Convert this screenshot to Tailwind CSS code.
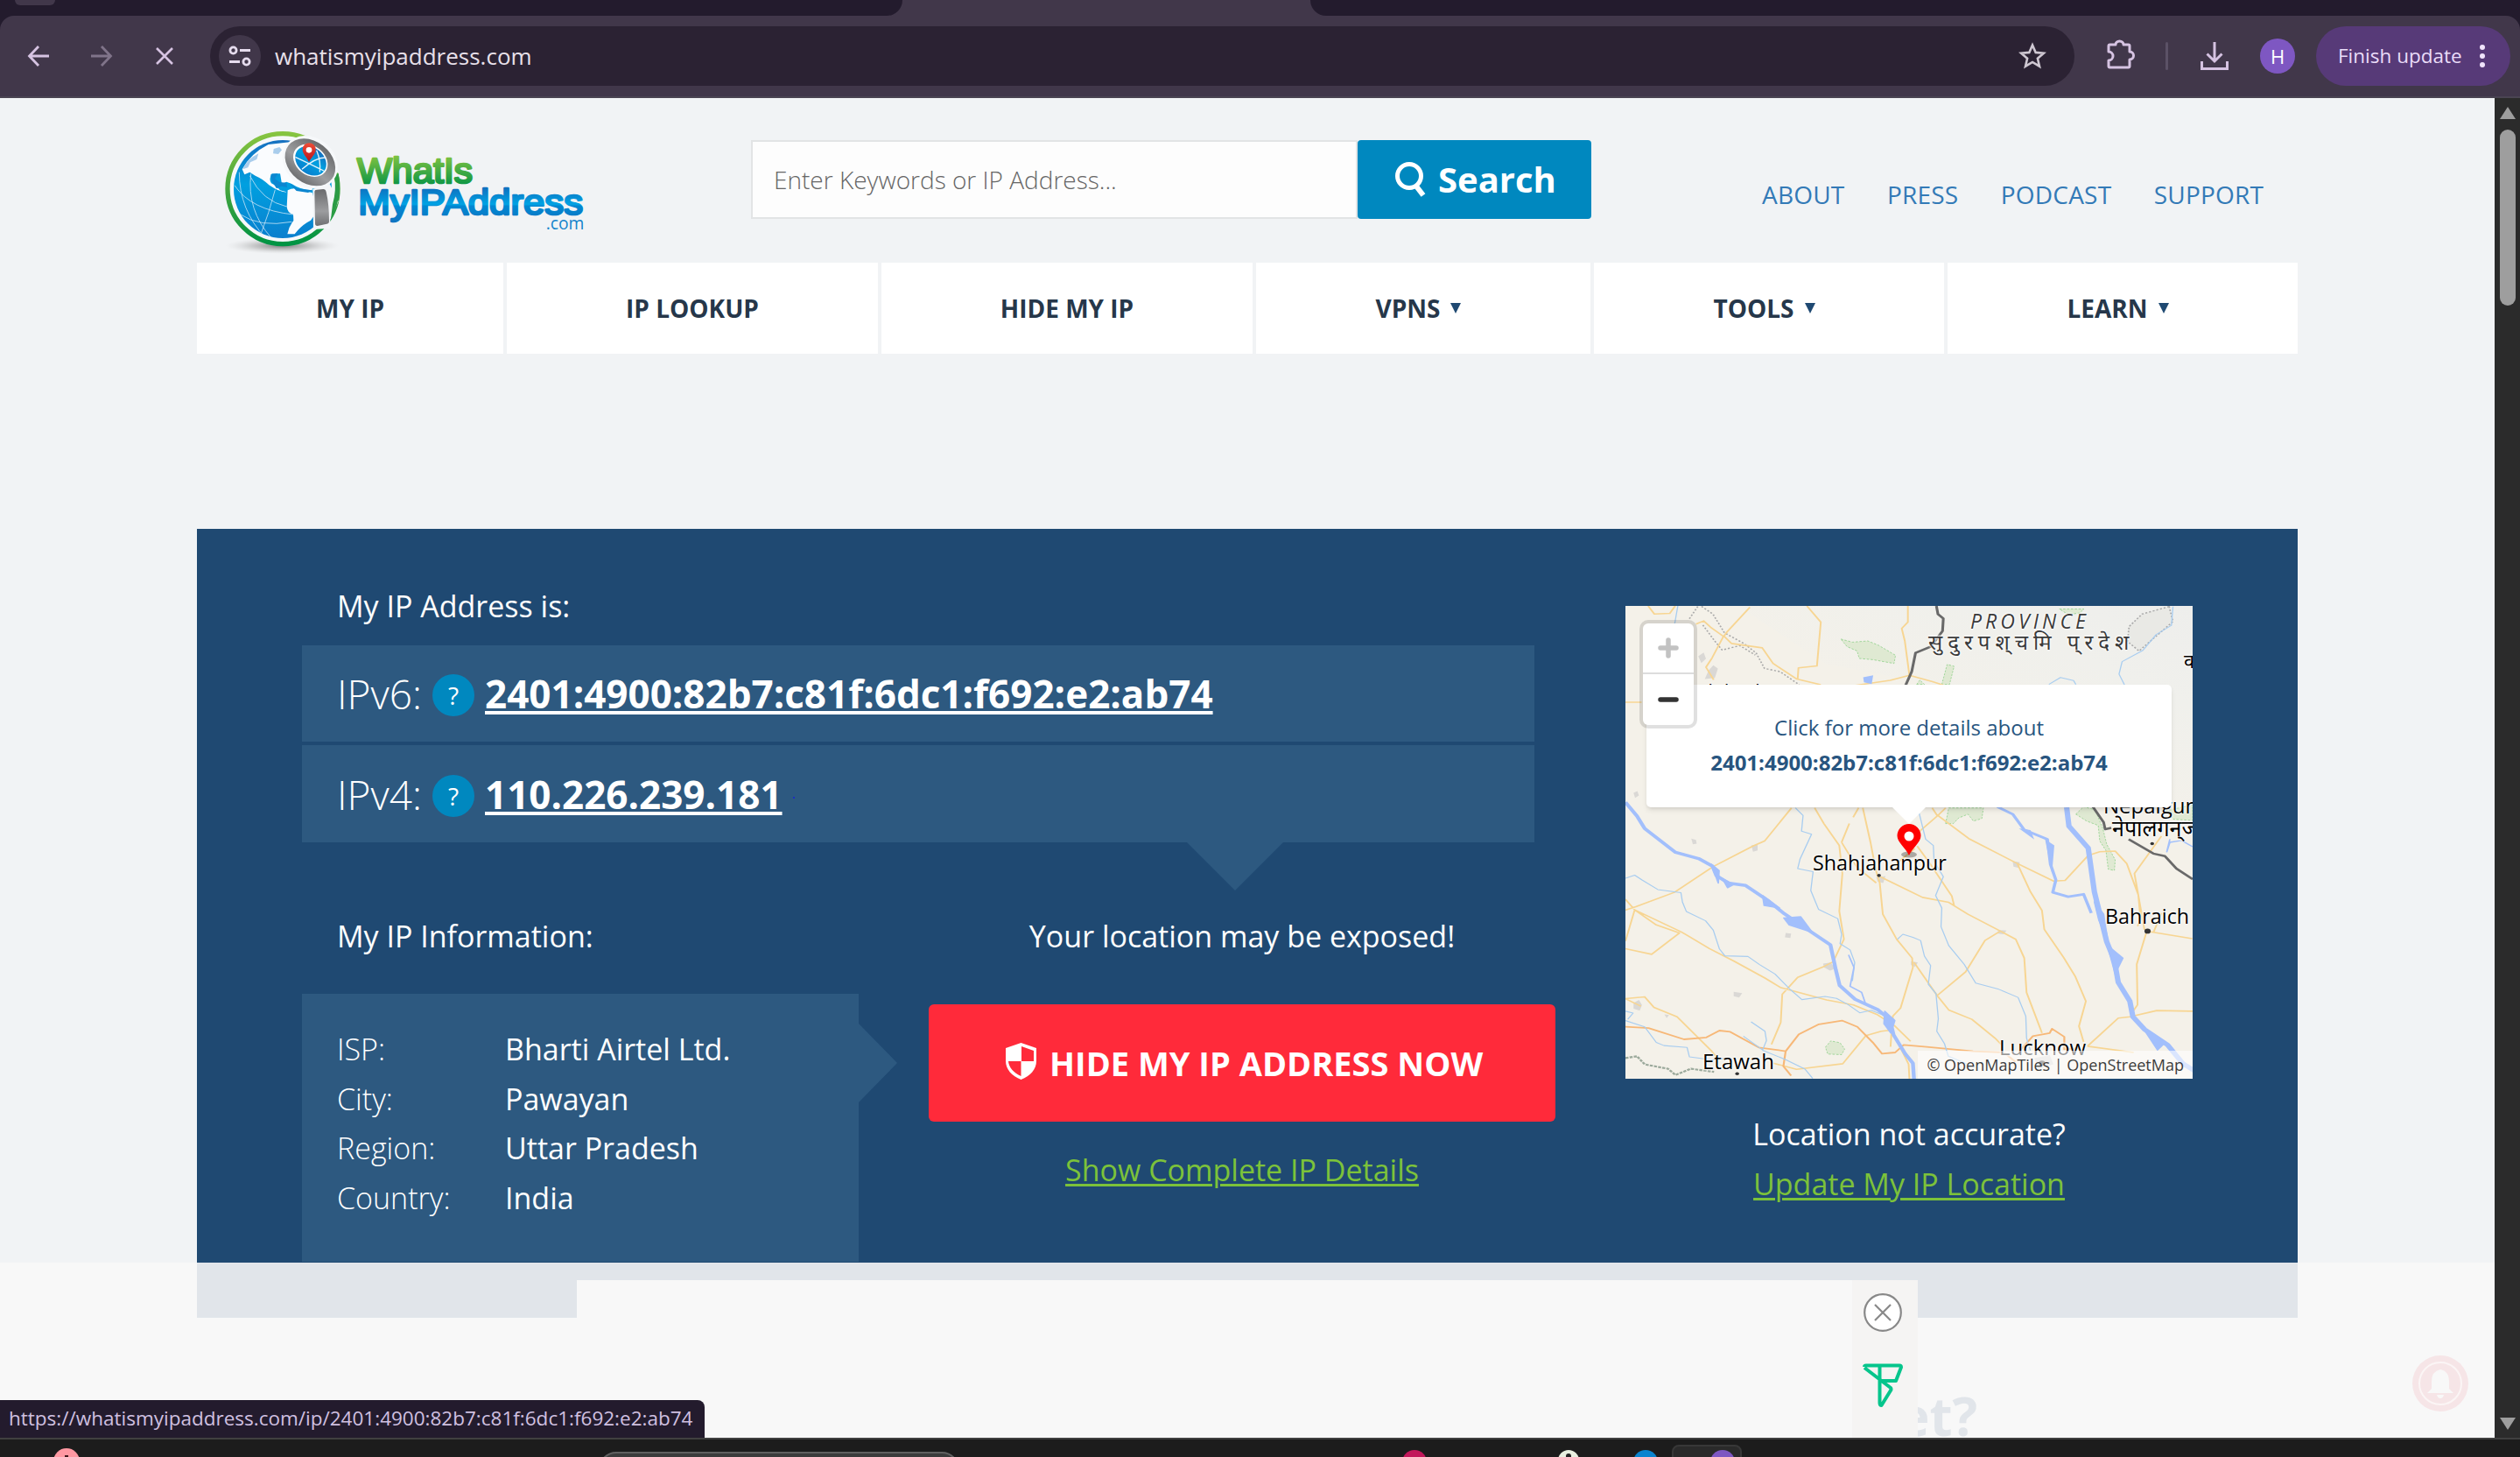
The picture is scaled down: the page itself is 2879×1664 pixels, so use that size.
<!DOCTYPE html>
<html lang="en">
<head>
<meta charset="utf-8">
<title>What Is My IP Address</title>
<script src="https://cdn.jsdelivr.net/npm/@tailwindcss/browser@4"></script>
</head>
<body class="flex h-[1664px] w-[2879px] flex-col overflow-hidden bg-[#f1f3f5] font-['Open_Sans','Noto_Sans',sans-serif]">

<!-- Browser tab strip -->
<div class="flex h-[18px] shrink-0 justify-between bg-[#41374a]">
  <div class="h-full w-[1031px] rounded-br-[20px] bg-[#231b2d]"><div class="ml-[17px] h-1.5 w-[46px] rounded-b-lg bg-[#41374a]"></div></div>
  <div class="h-full w-[1382px] rounded-bl-[20px] bg-[#231b2d]"></div>
</div>
<!-- Browser toolbar -->
<div class="h-[94px] shrink-0 bg-[#231b2d]">
<div class="flex h-full items-start rounded-t-[16px] border-b-2 border-[#4a4452] bg-[#41374a] pl-[30px] pt-3">
  <div class="flex h-[68px] w-[210px] items-center gap-11">
    <svg class="size-7" viewBox="0 0 28 28" fill="none" stroke="#d6c3e2" stroke-width="2.8"><path d="M26 14H4M14 3 3.500 14 14 25"/></svg>
    <svg class="size-7" viewBox="0 0 28 28" fill="none" stroke="#80748a" stroke-width="2.8"><path d="M2 14h22M14 3l10.500 11L14 25"/></svg>
    <svg class="size-7" viewBox="0 0 28 28" fill="none" stroke="#d6c3e2" stroke-width="2.600"><path d="M5 5l18 18M23 5 5 23"/></svg>
  </div>
  <div class="flex h-[68px] w-[2130px] items-center rounded-full bg-[#2b2233] pl-2.5">
    <div class="flex size-12 items-center justify-center rounded-full bg-[#41374a]">
      <svg class="size-7" viewBox="0 0 28 28" fill="none" stroke="#e6dcee" stroke-width="2.800"><circle cx="6.500" cy="7.500" r="3.600"/><path d="M14 7.500h12M2 20.500h12"/><circle cx="21.500" cy="20.500" r="3.600"/></svg>
    </div>
    <span class="ml-4 text-[26px] leading-[68px] text-[#e8e0ea]">whatismyipaddress.com</span>
    <svg class="ml-auto mr-8 size-8" viewBox="0 0 32 32" fill="none" stroke="#cfc8d2" stroke-width="2.600"><path d="M16 3.500l3.700 8.400 9.100.8-6.900 6 2.100 9-8-4.800-8 4.800 2.100-9-6.900-6 9.100-.8z"/></svg>
  </div>
  <div class="ml-[34px] flex h-[68px] items-center">
    <svg class="-mt-1 size-9" viewBox="0 0 36 36"><path d="M5 8.500Q5 7 6.500 7H13a4.500 4 0 0 1 9 0h5.500Q29 7 29 8.500V15a4.500 4.500 0 0 1 0 9v7.500q0 1.500-1.500 1.500h-21Q5 33 5 31.500V25a5 5 0 0 0 0-10z" fill="none" stroke="#d6c3e2" stroke-width="3" stroke-linejoin="round"/></svg>
    <div class="ml-[34px] h-8 w-[3px] rounded bg-[#5b5166]"></div>
    <svg class="ml-[37px] size-8" viewBox="0 0 32 32" fill="none" stroke="#d6c3e2" stroke-width="3"><path d="M16 0v22M7.500 13.500 16 22l8.500-8.500M1.500 22v8.500h29V22"/></svg>
    <div class="ml-[36px] flex size-10 items-center justify-center rounded-full bg-[#7e57c2] text-[22px] text-white">H</div>
    <div class="ml-6 flex h-[68px] w-[222px] items-center rounded-full bg-[#573a78] pl-[25px] text-[22.500px] text-[#eadcf8]">Finish update
      <div class="ml-auto mr-[29px] flex flex-col gap-1"><i class="size-1.5 rounded-full bg-[#f0e4fb]"></i><i class="size-1.5 rounded-full bg-[#f0e4fb]"></i><i class="size-1.5 rounded-full bg-[#f0e4fb]"></i></div>
    </div>
  </div>
</div>
</div>

<!-- Viewport -->
<div class="flex h-[1530px] shrink-0">
<div class="relative h-full w-[2850px] overflow-hidden">
<div class="mx-auto w-[2400px]">

  <header class="flex h-[188px] items-start">
    <svg class="-ml-[5px] mt-[18px] h-[170px] w-[500px] shrink-0" viewBox="0 0 1500 510">
      <defs>
        <linearGradient id="g1" x1="0" y1="0" x2="0" y2="1"><stop offset="0" stop-color="#86c440"/><stop offset=".55" stop-color="#3fa33e"/><stop offset="1" stop-color="#009444"/></linearGradient>
        <linearGradient id="g2" gradientUnits="userSpaceOnUse" x1="0" y1="145" x2="0" y2="245"><stop offset="0" stop-color="#7fc241"/><stop offset="1" stop-color="#0a9545"/></linearGradient>
        <linearGradient id="g3" gradientUnits="userSpaceOnUse" x1="0" y1="252" x2="0" y2="375"><stop offset="0" stop-color="#0f6fbe"/><stop offset=".47" stop-color="#00a3e4"/><stop offset=".52" stop-color="#0088d2"/><stop offset="1" stop-color="#1273c0"/></linearGradient>
        <linearGradient id="g4" x1="0" y1="0" x2="0" y2="1"><stop offset="0" stop-color="#6a6b6d"/><stop offset=".6" stop-color="#9c9d9f"/><stop offset="1" stop-color="#6f7072"/></linearGradient>
        <linearGradient id="g5" x1="0" y1="0" x2="0" y2="1"><stop offset="0" stop-color="#1670c0"/><stop offset=".45" stop-color="#00a0e0"/><stop offset="1" stop-color="#0a7fce"/></linearGradient>
        <linearGradient id="g6" x1="0" y1="0" x2="0" y2="1"><stop offset="0" stop-color="#f04e37"/><stop offset="1" stop-color="#b5121b"/></linearGradient>
        <radialGradient id="sh"><stop offset="0" stop-color="#555" stop-opacity=".75"/><stop offset=".5" stop-color="#888" stop-opacity=".4"/><stop offset="1" stop-color="#ccc" stop-opacity="0"/></radialGradient>
        <clipPath id="globe"><circle cx="309" cy="258" r="168"/></clipPath>
      </defs>
      <ellipse cx="307" cy="452" rx="195" ry="28" fill="url(#sh)"/>
      <circle cx="309" cy="257" r="189" fill="#f6f8fa" stroke="url(#g1)" stroke-width="16"/>
      <circle cx="309" cy="258" r="168" fill="url(#g5)"/>
      <g clip-path="url(#globe)">
        <path d="M170 190Q200 135 260 105L340 96 420 180 410 262Q372 262 340 240L322 233 306 240 300 205 272 205Q260 222 270 238L285 246 300 262 322 268Q300 270 262 244 240 222 215 212L196 200 178 208zM326 262Q350 248 376 264L410 270 430 330 405 365Q372 382 350 412H325Q330 385 346 366L345 345Q325 340 323 318z" fill="#fafcfe"/>
        <path d="M278 120l20-6 8 10-12 14-18-2zM172 190q14-34 54-54l-6 20-22 10-8 18z" fill="#a9cdec"/>
        <path d="M268 208l24-4-10 18 16 12 24 2 2 16-20-4-16 8-14-22zM330 236l30 20 50 6-14 8-40-6z" fill="#0c86d0"/>
        <g fill="none" stroke="#bfe0f5" stroke-width="3" opacity=".85"><path d="M144 245Q200 330 345 345M165 345Q230 390 340 370M160 200Q160 330 250 425M200 205Q185 330 270 425M283 260Q262 340 235 410M196 212Q240 300 323 318"/></g>
      </g>
      <path d="M470 90 520 190 478 212 395 70z" fill="#f1f3f5"/>
      <path d="M412 258 470 240 500 300 472 362 472 392 414 396z" fill="#f4f6f8"/>
      <path d="M500 204Q514 290 474 360L480 310Q494 260 486 216z" fill="#2b9b45"/>
      <ellipse cx="403" cy="166" rx="101" ry="84" transform="rotate(38 403 166)" fill="#f6f8fa"/>
      <ellipse cx="403" cy="166" rx="94" ry="72" transform="rotate(38 403 166)" fill="url(#g4)"/>
      <ellipse cx="404" cy="160" rx="64" ry="50" transform="rotate(38 404 160)" fill="#fff"/>
      <ellipse cx="405" cy="161" rx="58" ry="45" transform="rotate(38 405 161)" fill="url(#g5)"/>
      <path d="M352 148Q410 175 455 198M375 190Q420 150 455 150M425 125Q440 160 436 200" fill="none" stroke="#e6f4fc" stroke-width="4"/>
      <path d="M399 165C390 145 377 138 377 122a22 22 0 0 1 45 0C422 138 408 146 399 165z" fill="url(#g6)"/><circle cx="399" cy="124" r="10" fill="#fff"/>
      <path d="M418 266Q418 260 426 260L448 258Q456 258 458 268 468 310 468 368 468 376 460 377L428 384Q420 384 420 376z" fill="url(#g4)"/>
      <g font-family="'Liberation Sans'" font-weight="400" stroke-linejoin="round" stroke-linecap="round">
        <text x="564" y="237" font-size="122" textLength="396" lengthAdjust="spacingAndGlyphs" fill="url(#g2)" stroke="url(#g2)" stroke-width="8">WhatIs</text>
        <text x="568" y="344" font-size="122" textLength="770" lengthAdjust="spacingAndGlyphs" fill="url(#g3)" stroke="url(#g3)" stroke-width="8">MyIPAddress</text>
      </g>
      <text x="1211" y="396" font-size="62" font-family="'Open Sans'" textLength="131" lengthAdjust="spacingAndGlyphs" fill="#1584cc">.com</text>
    </svg>
    <div class="ml-[138px] mt-12 flex h-[90px] w-[960px]">
      <div class="w-[693px] border-2 border-[#e2e4e5] bg-[#fdfdfd] pl-6 text-[28px] font-light leading-[86px] text-[#666]">Enter Keywords or IP Address...</div>
      <div class="flex w-[267px] items-center rounded-[4px] bg-[#0088bf] pl-[42px] text-[40px] font-bold leading-[90px] text-white">
        <svg class="size-10" viewBox="0 0 40 40" fill="none" stroke="#fff" stroke-width="5"><circle cx="17" cy="16" r="13.500"/><path d="M24.500 27l8.500 11" stroke-width="6"/></svg>
        <span class="ml-2.5">Search</span>
      </div>
    </div>
    <nav class="ml-[195px] mt-[90px] flex gap-[48.500px] text-[28px] font-medium leading-[40px] tracking-[0.2px] text-[#337ab7]"><span>ABOUT</span><span>PRESS</span><span>PODCAST</span><span>SUPPORT</span></nav>
  </header>

  <nav class="flex h-[104px] gap-1 text-center text-[28px] font-bold leading-[105px] text-[#26374a]">
    <div class="w-[350px] bg-white">MY IP</div>
    <div class="w-[424px] bg-white">IP LOOKUP</div>
    <div class="w-[424px] bg-white">HIDE MY IP</div>
    <div class="flex w-[382px] items-center justify-center gap-3 bg-white pr-[11px]">VPNS<svg class="h-3 w-3" viewBox="0 0 12 12"><path d="M0 0h12L6 12z" fill="#1f4972"/></svg></div>
    <div class="flex w-[400px] items-center justify-center gap-3 bg-white pr-[11px]">TOOLS<svg class="h-3 w-3" viewBox="0 0 12 12"><path d="M0 0h12L6 12z" fill="#1f4972"/></svg></div>
    <div class="flex w-[400px] items-center justify-center gap-3 bg-white pr-[11px]">LEARN<svg class="h-3 w-3" viewBox="0 0 12 12"><path d="M0 0h12L6 12z" fill="#1f4972"/></svg></div>
  </nav>

  <main class="mt-[200px] flex h-[838px] bg-[#1f4972] pl-[120px] text-[34px] leading-10 text-white">
    <div class="w-[1432px] pt-[68px]">
      <h2 class="pl-10">My IP Address is:</h2>
      <div class="relative mt-[25px] w-[1408px] leading-[110px]">
        <div class="flex h-[110px] items-center bg-[#2d5980] pl-10 text-[44px]"><span class="w-[109px] text-[46px] font-light">IPv6:</span><span class="mt-1 flex size-12 items-center justify-center rounded-full bg-[#0088bf] text-[28px] leading-none">?</span><a class="ml-3 font-bold underline decoration-4 underline-offset-[3px] [text-decoration-skip-ink:none]">2401:4900:82b7:c81f:6dc1:f692:e2:ab74</a></div>
        <div class="mt-1 flex h-[111px] items-center bg-[#2d5980] pl-10 text-[44px]"><span class="w-[109px] text-[46px] font-light">IPv4:</span><span class="mt-1 flex size-12 items-center justify-center rounded-full bg-[#0088bf] text-[28px] leading-none">?</span><a class="ml-3 font-bold underline decoration-4 underline-offset-[3px] [text-decoration-skip-ink:none]">110.226.239.181</a><i class="ml-3 mt-2 size-0.5 bg-[#1c2fc0]"></i></div>
        <svg class="absolute left-[1011px] top-full h-[55px] w-[110px]" viewBox="0 0 110 55"><path d="M0 0h110L55 55z" fill="#2d5980"/></svg>
      </div>
      <div class="mt-[87px] flex">
        <div class="w-[716px]">
          <h2 class="pl-10">My IP Information:</h2>
          <div class="relative mt-[46px] grid h-[306px] w-[636px] grid-cols-[192px_1fr] auto-rows-[56.500px] bg-[#2d5980] pl-10 pt-[35px] leading-[56.500px]">
            <span class="font-light">ISP:</span><span>Bharti Airtel Ltd.</span>
            <span class="font-light">City:</span><span>Pawayan</span>
            <span class="font-light">Region:</span><span>Uttar Pradesh</span>
            <span class="font-light">Country:</span><span>India</span>
            <svg class="absolute left-full top-[34px] h-[90px] w-[44px]" viewBox="0 0 44 90"><path d="M0 0v90L44 45z" fill="#2d5980"/></svg>
          </div>
        </div>
        <div class="w-[716px] text-center">
          <p>Your location may be exposed!</p>
          <div class="mt-[58px] flex h-[134px] items-center rounded-[6px] bg-[#ff2a3a] pl-[88px] text-[38px] font-bold leading-[134px]">
            <svg class="-mt-1 h-[42px] w-[35px]" viewBox="0 0 35 42"><path d="M17.500 0 35 6v15c0 9-7 17-17.500 21C7 38 0 30 0 21V6z" fill="#fff"/><path d="M18 4l14 5v12H18zM17.500 21v17C9 34 3.500 28 3 21z" fill="#ff2a3a"/></svg>
            <span class="ml-[15px]">HIDE MY IP ADDRESS NOW</span>
          </div>
          <p class="mt-[35px] text-[#7cc23a]"><a class="underline decoration-[3px] underline-offset-[3px]">Show Complete IP Details</a></p>
        </div>
      </div>
    </div>

    <div class="ml-20 w-[648px] pt-[88px]">
      <div class="relative h-[540px] overflow-hidden bg-[#f4f1e9]">
        <svg class="h-full w-full" viewBox="39 34 1472 1512" preserveAspectRatio="none" fill="none" stroke-linejoin="round">
          <defs><linearGradient id="hill" x1="0" y1="1" x2="1" y2="0"><stop offset=".35" stop-color="#f4f1e9"/><stop offset=".75" stop-color="#f0f0ec"/><stop offset="1" stop-color="#eeeeec"/></linearGradient></defs>
          <path d="M330 34H1511V680L1250 670 900 300 560 220z" fill="url(#hill)"/>
          <g fill="#dfe9d2" stroke="#8fd08a" stroke-width="2" stroke-dasharray="6 4">
            <path d="M598 140l30 10 40-4 28 14 44 32-4 26-54-12-36-4-6-24-26-14zM860 285l14-64 18 6-12 58zM1165 44h64l-10 12-30 6zM870 730l8-50h90l-4 34-22 8-14-22-24 12-14 18zM1208 700l20-24 30 10 20 60 10 50 22 50-2 34-16-4-6-60-16-30-4-50-30-14zM558 1445l14-20 24 6 12 20-8 18-36-2zM795 285l8-14 12 14zM1440 690l71-20v50l-50-4z"/>
          </g>
          <g fill="#dad8d5">
            <path d="M228 195l14-12 6 20-12 14zM255 240l12-16 12 10-8 30-26 4zM60 632l10-6 4 14-10 8zM210 778l12 4 2 12-10 2zM366 800l16-4v20l-12 4zM455 1080l14 2-2 14-14-2zM552 1178l20-4 12 20-14 6-16-10zM320 1268l22 4-8 14-14-4zM60 1304l14-10 8 16-6 18-16-6zM690 902l24-4-6 22-14-4zM1044 850l18 4-2 18-14-4zM1006 1070l22 2-8 12-14-2zM780 1170l18 4-8 14-10-6zM1100 1480l40-10 10 30-40 14zM140 1340l12 2-6 10z"/>
          </g>
          <path d="M205 75l25-45 36 30 30 60 50 34 32 30 22 50 40 10 50 42M240 95l30 50 20 30 46-14 40 30" stroke="#aaa" stroke-width="4" stroke-dasharray="5 5"/>
          <path d="M1450 36l-70 24-34 40-4 48 30 30 88-94z" stroke="#aaa" stroke-width="4" stroke-dasharray="5 5" fill="#e9e9e5"/>
          <!-- roads -->
          <g stroke="#f7d592" stroke-width="4.500">
            <path d="M98 34l16 26 40-2 14-24M362 38l-60 80-8 14-34-30-18-20-20 10M294 130l20 24 80 14 28 50 62 50 62 18M294 130l-30 70-16 30 20 40M510 34l36 52-10 140-48 6-2 36M772 34v52l-16 20 8 40 12 110-50 16-90 16M776 256l60 20 30 12M39 342h42"/>
            <path d="M470 680l-70 106-30 16-104 66-100 82-100 46-35 14M39 972l24 34 120 70 14 10 60 44 64 40 80 54 40 30 120 40 70 16 60 30 46 36 42 50M63 1006l-24 100M39 1130l68 18 72-68-60-26-56-48M530 680l24 50 40 70 8 90-8 120 8 60 4 30-28 72-22 14-70 36-40 54-4 90-24 70M655 680l20 110 14 90 10 40 8 100 36 80 40 60 2 30-32 130-20 26-4 60-2 38M644 680l-14 30M600 790l20-60M600 790l40 80 50 50M700 900l110 66 68 16 14 10-6-30-60-110-30-50M760 800l90-96 20-24M790 810l-60 60M850 704l80 74 120 76 100 60 30-2 60-80 30-12 40-2 30 40 30 100 6 80-8 20M835 680l14 26M1056 858l34 90 30 60 6 60 50 90 30 60 28 80-18 80 12 50M878 982l50 38 84 54 40 26 22 60 6 110 40 130M1012 1074l-40 30-50 100-74 76-60-106M848 1280l30 46 60 30 60 60 16 20M1238 1442l80-90 30-4 70-20 93 2M1238 1442l120 20M1354 1334l14-24-2-130 26-106 118 24M1410 1076l20-60M1430 770l-70 120 16 110 10 70M39 1290l50-6 24 34 60 30 90 110 20 30M39 1290l40 24M663 1408l-60 90-120 18-60-20M663 1408l40-14 30-4M750 1440l24 60 2 46"/>
          </g>
          <path d="M39 1380l60 4 92 36 58-6 34-22 28 4 74 50 70 12 34-54 52-32 60-12 40 20 40 50 24 36 34-4 22-24 60 6 120 14 80 4 30 30M455 1456l-6 50 20 30M1060 1460l36-50 44-10 6-14 32 26v40l40-4" stroke="#f7b878" stroke-width="5"/>
          <!-- rivers -->
          <g stroke="#a8cdf0" stroke-width="3">
            <path d="M175 34l-8 56M39 905l24-10 20 16 40 30 60 10 4 30 10 30 50 30 20 30 16 60 14 22 60 2 30 26 40 30 40 50 30 32 60-10 30 6 30 20 30 26 30-8 40 20 20 10M480 680l20 24-4 50 26 10-30 80-6 30 40 10-6 60 20 60 50 30 10 50-4 30 26 20 12 40-6 60M800 690l18 90 20 20 2 50 24 50-20 60 16 40-2 60 20 60 40 60 30 60 60 20 50 26 20 60 2 70 10 40M745 1100l14-16 26 10 20 10 10 50 16 30-6 60 20 30 6 80-4 40 20 40 10 40 40 20 30 16M1460 36l-4 60-40 30-34 50-54 36-8 40 14 34M1138 285l30-22 34 10 6 12M39 1360l50 20 30 50 20 10 60 6 6 30 60 10 40-6M365 1364l36 30 4 30-10 30-50-44M395 1455l60 30 50 30 20 30M39 1330l20 6-14 20"/>
          </g>
          <path d="M1452 780l-8 40 8-30 30-6 29 20" stroke="#a2c0fb" stroke-width="4"/>
          <path d="M39 662l30 44 20 40 80 76 60 20 36 24 10 30 30 24 46 8 60 50 40 40 60 50 60 50 14 80 10 50 40 44 60 34 30 30 10 50 30 60 20 30 4 70" stroke="#a2bffc" stroke-width="10"/>
          <path d="M262 860l20 20-2 40zM290 905l30 20-16 10zM395 960l44 40-40-8zM450 1032l44-4 30 50-60-24zM712 1330l26 30-10 40-18-30z" fill="#a2bffc" stroke="#a2bffc" stroke-width="4"/>
          <path d="M618 1150l14 40-10 60 30 20 10 36" stroke="#a2bffc" stroke-width="4"/>
          <path d="M1004 676l40 24 30 50 60 30 8 80 14 50-8 40 40 14 40-8 20 60" stroke="#a2bffc" stroke-width="8"/>
          <path d="M1128 780l24 20-6 90zM1060 745l40 36-10-30z" fill="#a2bffc"/>
          <path d="M1184 678l6 60 50 70 16 140 20 100 12 60 20 60 10 70 30 60 8 50 30 40 60 50 40 60 40 30" stroke="#a2bffc" stroke-width="14"/>
          <path d="M1256 980l24 40 10 80-22-60zM1290 1120l40 40-20 50zM1380 1380l60 50-20 24z" fill="#a2bffc" stroke="#a2bffc" stroke-width="4"/>
          <path d="M656 262l26-6-4 28-20-6z" fill="#a2bffc"/>
          <path d="M39 1480l30-6 20 26 60 14 20 20 40-20 60 10" stroke="#9ba99b" stroke-width="6" stroke-dasharray="8 3"/>
          <!-- national border -->
          <path d="M846 34l4 26 14 14-2 40-30 50-40 20-10 60-16 44M1252 676l28 50 4 22 16-4M1345 780l64 46 30 8 30 40 42 34" stroke="#696969" stroke-width="7"/>
          <g fill="#333"><circle cx="697" cy="896" r="5"/><circle cx="1406" cy="794" r="5"/><circle cx="1394" cy="1074" r="8"/><circle cx="329" cy="1530" r="5"/></g>
          <circle cx="1120" cy="1496" r="8" fill="#333"/>
        </svg>
        <div class="absolute inset-0 text-black [text-shadow:0_0_3px_#fff,0_0_3px_#fff,0_0_2px_#fff]">
          <div class="absolute left-[394px] top-[1px] text-[23px] italic leading-[32px] tracking-[4.100px] text-[#3a3a3a]">PROVINCE</div>
          <div class="absolute left-[346px] top-[25px] whitespace-nowrap text-[24px] leading-[32px] tracking-[6px] text-[#3a3a3a]">सुदुरपश्‌चमि प्‌रदेश</div>
          <div class="absolute left-[638px] top-[46px] text-[22px] leading-[32px]">क</div>
          <div class="absolute left-[86px] top-[82px] text-[23px] leading-[32px]">dabad</div>
          <div class="absolute left-[546px] top-[212px] text-[24px] leading-[32px]">Nepalgunj</div>
          <div class="absolute left-[556px] top-[237px] whitespace-nowrap text-[25px] leading-[32px]">नेपालगन्‌ज</div>
          <div class="absolute left-[214px] top-[277px] text-[23.300px] leading-[32px]">Shahjahanpur</div>
          <div class="absolute left-[548px] top-[338px] text-[23.300px] leading-[32px]">Bahraich</div>
          <div class="absolute left-[427px] top-[488px] text-[24px] leading-[32px]">Lucknow</div>
          <div class="absolute left-[88px] top-[504px] text-[24px] leading-[32px]">Etawah</div>
        </div>
        <div class="absolute bottom-0 right-0 flex h-8 items-center bg-white/60 px-2.5 text-[18px] text-[#3d3d3d]">© OpenMapTiles | OpenStreetMap</div>
        <div class="absolute left-6 top-[90px] flex h-[140px] w-[600px] flex-col items-center rounded-[5px] bg-white pt-[29px] text-[24px] leading-[40px] text-[#28557f] shadow-md"><span>Click for more details about</span><b>2401:4900:82b7:c81f:6dc1:f692:e2:ab74</b></div>
        <svg class="absolute left-[304px] top-[229px] h-6 w-10" viewBox="0 0 40 24"><path d="M0 0h40L20 20z" fill="#fff"/></svg>
        <svg class="absolute left-[309px] top-[248px] h-10 w-[30px]" viewBox="0 0 30 40"><ellipse cx="15" cy="36" rx="9" ry="3.500" fill="#000" opacity=".3"/><path d="M15 37C11 28 1.500 22 1.500 14.500a13.500 13.500 0 0 1 27 0C28.500 22 19 28 15 37z" fill="#f00"/><circle cx="15" cy="15" r="5.500" fill="#fff"/></svg>
        <div class="absolute left-4 top-4 h-[124px] w-[66px] rounded-[10px] border-4 border-black/12 bg-white bg-clip-padding">
          <div class="flex h-[58px] items-center justify-center border-b-2 border-[#ddd]"><svg class="size-6" viewBox="0 0 24 24" stroke="#c2c2c2" stroke-width="5.500" stroke-linecap="round"><path d="M3 12h18M12 3v18"/></svg></div>
          <div class="flex h-[58px] items-center justify-center"><svg class="size-6" viewBox="0 0 24 24" stroke="#333" stroke-width="5.500" stroke-linecap="round"><path d="M3 12h18"/></svg></div>
        </div>
      </div>
      <p class="mt-[35px] text-center leading-[57px]">Location not accurate?<br><a class="text-[#7cc23a] underline decoration-[3px] underline-offset-[3px]">Update My IP Location</a></p>
    </div>
  </main>
</div>

<!-- Sticky ad overlay -->
<div class="absolute inset-x-0 bottom-0 h-[200px] bg-[#f8f8f8]">
  <div class="mx-auto h-[63px] w-[2400px] bg-[#e1e5ea]"></div>
  <div class="absolute left-[2169px] top-[121px] text-[60px] font-bold leading-[108px] text-[#e1e5ea]">et?</div>
  <div class="absolute left-[659px] top-5 flex h-[180px] w-[1532px] justify-end bg-[#f8f8f8]">
    <div class="flex w-[75px] flex-col items-center bg-[#f5f4f3] pr-[5px] pt-[15px]">
      <svg class="size-11" viewBox="0 0 44 44" fill="#fff" stroke="#888" stroke-width="2.200"><circle cx="22" cy="22" r="20.800"/><path d="M13 13l18 18M31 13 13 31"/></svg>
      <svg class="mt-[36px] h-[50px] w-[46px]" viewBox="0 0 46 50" fill="none" stroke="#06c58c" stroke-width="4" stroke-linejoin="round"><path d="M2 4Q2 2.500 4 2.500H42Q44 2.500 44 4.500L38 20H19.500V3M2 5 32 28Q33 30 32 31L21.500 48Q19.500 48 19.500 45V20"/></svg>
    </div>
  </div>
  <svg class="absolute right-[30px] top-[106px] size-16" viewBox="0 0 64 64"><circle cx="32" cy="32" r="32" fill="#f6e5e7"/><circle cx="32" cy="32" r="24" fill="none" stroke="#fbf5f5" stroke-width="2"/><path d="M32 16q10 2 10 14v8l5 5H17l5-5v-8q0-12 10-14zM28 45h8q-1 4-4 4t-4-4z" fill="#f8f8f8"/></svg>
</div>

<!-- Link target bubble -->
<div class="absolute bottom-0 left-0 h-[43px] w-[805px] rounded-tr-[8px] bg-[#231b2d] pl-[10px] text-[22.500px] leading-[42px] text-[#d0c0e0]">https://whatismyipaddress.com/ip/2401:4900:82b7:c81f:6dc1:f692:e2:ab74</div>
</div>

<!-- Scrollbar -->
<div class="flex h-full w-[29px] flex-col items-center bg-[#2b2b2b] pt-2.5">
  <svg class="h-3.5 w-[18px]" viewBox="0 0 18 14"><path d="M9 0l9 14H0z" fill="#9e9e9e"/></svg>
  <div class="mt-3 h-[201px] w-[18px] rounded-full bg-[#9e9e9e]"></div>
  <svg class="mb-[9px] mt-auto h-3.5 w-[18px]" viewBox="0 0 18 14"><path d="M9 14l9-14H0z" fill="#9e9e9e"/></svg>
</div>
</div>

<!-- Taskbar -->
<div class="relative h-[22px] shrink-0 overflow-hidden border-t-2 border-[#404040] bg-[#1c1c1c]">
  <div class="absolute left-[61px] top-2.5 flex size-[30px] justify-center rounded-full bg-[#ff98a2] pt-2"><i class="h-4 w-1 bg-[#40181c]"></i></div>
  <div class="absolute left-[684px] top-3.5 h-10 w-[412px] rounded-full border-2 border-[#606060] bg-[#3b3b3b]"></div>
  <div class="absolute left-[1602px] top-3 size-7 rounded-full bg-[#c2185b]"></div>
  <div class="absolute left-[1780px] top-3 flex size-6 justify-center rounded-full bg-[#e8efdf] pt-1"><i class="h-6 w-1.5 rounded-full bg-[#222]"></i></div>
  <div class="absolute left-[1866px] top-3 size-7 rounded-full bg-[#0a84cf]"></div>
  <div class="absolute left-[1910px] top-1.5 h-10 w-[80px] rounded-[8px] border-2 border-[#383838] bg-[#2a2a2a]"></div>
  <div class="absolute left-[1954px] top-3 size-7 rounded-full bg-[#7e57c2]"></div>
</div>
</body>
</html>
